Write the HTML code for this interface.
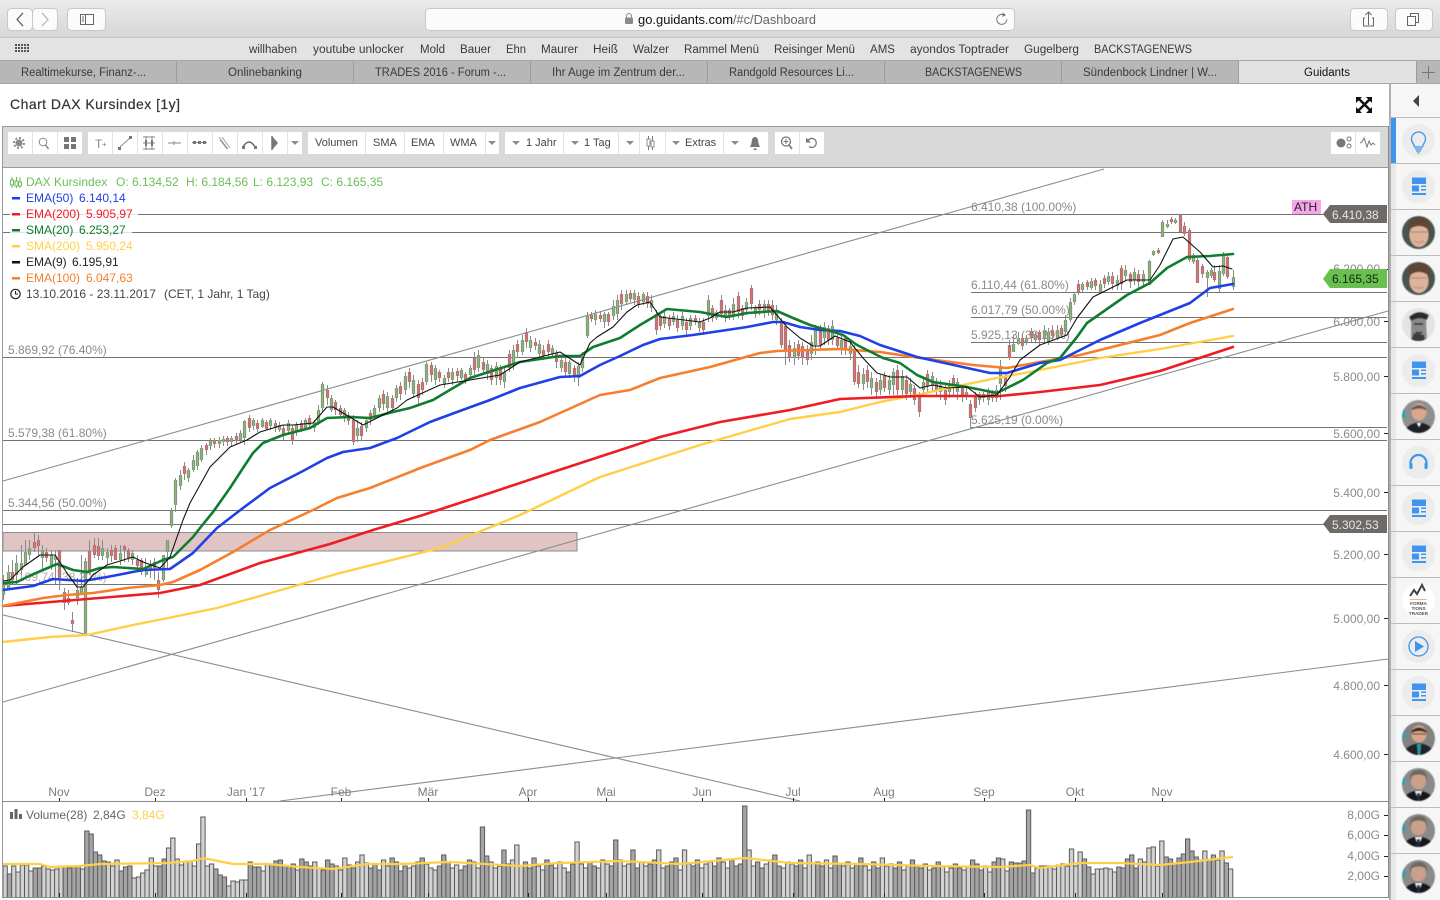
<!DOCTYPE html>
<html><head><meta charset="utf-8"><title>Guidants</title>
<style>
html,body{margin:0;padding:0;background:#fff;width:1440px;height:900px;overflow:hidden}
svg{display:block;font-family:"Liberation Sans",Arial,sans-serif}
.bm text,.tb text{fill:#3a3a3a;font-size:11.5px}
.lab{fill:#8a8a8a;font-size:12px}
.ax{fill:#8a8a8a;font-size:12px;text-anchor:end}
.xl{fill:#7d7d7d;font-size:12px;text-anchor:middle}
.btn{fill:#fff}
.t{fill:#444;font-size:11px}
.ar{fill:#8c8c8c}
.ic{fill:none;stroke:#8a8a8a;stroke-width:1}
</style></head><body>
<svg width="1440" height="900" viewBox="0 0 1440 900" xmlns="http://www.w3.org/2000/svg">
<defs>
<linearGradient id="tg" x1="0" y1="0" x2="0" y2="1"><stop offset="0" stop-color="#ebebeb"/><stop offset="1" stop-color="#d6d6d6"/></linearGradient>
<filter id="bl" x="-5%" y="-5%" width="110%" height="110%"><feGaussianBlur stdDeviation=".55"/></filter>
<symbol id="news" width="33" height="33" viewBox="0 0 33 33"><circle cx="16.5" cy="16.5" r="16.5" fill="#ececec"/><path fill="#3f94ee" d="M10 7.500h14v6.500H10zM10 15.500h7v6h-7zM19 15.500h5v1.500h-5zM19 19h5v1.500h-5zM10 23h14v2H10z"/></symbol>
<clipPath id="cc"><circle cx="16.500" cy="16.500" r="16.500"/></clipPath>
<symbol id="av1" width="33" height="33" viewBox="0 0 33 33"><g clip-path="url(#cc)"><rect width="33" height="33" fill="#46564e"/><ellipse cx="17" cy="11" rx="11" ry="10" fill="#5f4434"/><ellipse cx="17" cy="19" rx="9.500" ry="12" fill="#deb39c"/><path d="M8 13q9-6 18 0l-1-6H9z" fill="#5f4434"/><path d="M9 16h16" stroke="#9a8478"/><path d="M12 25q5 2.500 10 0" stroke="#c08a7c" fill="none"/></g></symbol>
<symbol id="av2" width="33" height="33" viewBox="0 0 33 33"><g clip-path="url(#cc)"><rect width="33" height="33" fill="#e4e4e4"/><path d="M9 33V12q8-7 15-2l1 23z" fill="#8b8b8b"/><path d="M7 9q9-9 20-2l-2 5q-8-4-16 1z" fill="#2c2c2c"/><path d="M12 16h9M14 24q4 2 6 0" stroke="#333" stroke-width="1.800" fill="none"/><path d="M9 33l3-8 10 2 1 6z" fill="#3a3a3a"/></g></symbol>
<symbol id="av3" width="33" height="33" viewBox="0 0 33 33"><g clip-path="url(#cc)"><rect width="33" height="33" fill="#8f8f8f"/><path d="M0 7l3 3v9l-3-2z" fill="#19a3b2"/><ellipse cx="17" cy="12" rx="7.500" ry="8.500" fill="#d9a68e"/><path d="M9.500 9q7-8 15 0l-1 1q-6-3-13 0z" fill="#6b5a48"/><path d="M2 33q2-9 15-11 13 2 15 11z" fill="#1f2125"/><path d="M15 23l2 4 2-4z" fill="#fff"/></g></symbol>
<symbol id="av4" width="33" height="33" viewBox="0 0 33 33"><g clip-path="url(#cc)"><rect width="33" height="33" fill="#828282"/><path d="M0 6l3 3v9l-3-2z" fill="#19a3b2"/><ellipse cx="17" cy="12" rx="7.500" ry="8.500" fill="#d6a58c"/><path d="M9.500 9q7-7 15 0v2q-7-4-15 0z" fill="#3a2c22"/><path d="M10 12h14" stroke="#33261e"/><path d="M1 33q2-10 16-12 14 2 16 12z" fill="#202226"/><path d="M15 22h4l-1 11h-2z" fill="#1f9fb0"/></g></symbol>
<symbol id="av5" width="33" height="33" viewBox="0 0 33 33"><g clip-path="url(#cc)"><rect width="33" height="33" fill="#8a8a8a"/><path d="M0 5l3 4v9l-3-2z" fill="#19a3b2"/><ellipse cx="16.500" cy="13" rx="7.500" ry="8.500" fill="#c9a08c"/><path d="M8 13q-1-11 9-11 9 0 8 11l-2-5q-6-3-13 0z" fill="#6c6a60"/><path d="M1 33q2-9 15-11 14 2 16 11z" fill="#17191d"/><path d="M13 23h7l-2 5h-3z" fill="#eee"/><path d="M15 25h3v8h-3z" fill="#222a44"/></g></symbol>
<path id="gc" d="M3 585V595M8 572V590M16 563V575M21 563V570M25 552V565M29 548V555M42 550V558M51 555V565M55 556V560M77 590V598M81 587V593M85 561V635M102 548V556M107 552V558M120 553V560M132 553V560M146 568V575M150 565V570M163 555V580M167 540V552M171 511V526M175 480V505M180 475V486M188 470V478M193 460V470M197 452V466M201 448V460M210 441V446M219 440V444M223 439V442M231 438V442M240 433V440M244 421V438M253 420V426M262 420V427M270 420V426M279 425V430M288 423V431M296 425V432M305 420V428M314 422V428M318 410V423M322 384V408M331 398V410M344 410V418M357 428V436M366 420V428M374 408V416M379 398V408M387 396V408M396 388V398M405 376V390M413 380V394M426 364V382M435 368V380M444 378V384M452 372V380M461 370V378M470 368V375M478 355V368M487 364V374M496 366V378M504 372V382M513 350V364M522 340V352M530 340V348M539 344V354M552 348V354M561 360V368M569 362V374M578 366V378M582 358V368M587 316V336M595 314V320M604 314V322M613 306V316M617 300V314M626 294V302M634 293V300M643 294V302M651 300V308M664 316V324M673 316V322M682 316V326M690 318V326M699 322V328M708 300V316M716 312V318M725 310V318M733 304V316M746 302V310M755 308V314M764 304V312M776 310V320M794 348V358M811 342V354M815 330V345M824 327V338M832 326V340M841 340V350M850 346V354M863 374V384M871 378V388M880 380V390M889 380V390M893 372V385M902 376V390M910 384V392M923 382V390M932 376V386M940 385V392M949 384V392M957 382V392M966 392V397M979 394V400M988 392V400M996 390V398M1000 366V384M1013 344V352M1018 338V344M1026 338V342M1035 335V340M1044 330V338M1048 332V342M1057 330V338M1065 320V332M1070 302V320M1074 294V302M1082 284V290M1091 281V288M1100 284V292M1108 276V282M1117 280V286M1125 270V276M1134 272V280M1143 274V282M1149 261V285M1153 251V255M1162 222V237M1167 224V227M1175 220V223M1193 255V262M1207 272V278M1211 270V276M1219 271V289M1223 254V274M1233 277V287"/>
<path id="rc" d="M12 572V580M34 542V548M38 540V546M46 552V558M59 550V578M64 592V603M68 598V603M72 620V624M89 551V573M94 545V555M98 546V556M111 550V556M115 548V560M124 546V550M128 550V558M137 560V566M141 560V572M154 562V568M158 580V590M184 466V474M206 445V450M214 440V444M227 438V442M236 436V441M249 418V428M257 423V429M266 422V429M275 423V428M283 428V435M292 428V440M301 423V430M309 418V425M327 390V398M335 402V410M340 408V415M348 415V421M353 420V442M361 426V436M370 413V420M383 394V404M392 398V408M400 386V394M409 372V382M418 384V398M422 382V390M431 365V375M439 372V378M448 372V378M457 371V376M465 374V380M474 358V370M483 362V370M491 368V380M500 368V380M509 354V368M517 344V352M526 332V342M535 342V346M543 350V356M548 344V352M556 353V362M565 362V372M574 368V376M591 315V319M600 315V319M608 314V322M621 294V304M630 293V299M638 296V304M647 296V304M656 314V330M660 316V326M669 318V326M677 320V328M686 322V330M695 318V322M703 322V330M712 308V318M721 300V314M729 310V316M738 296V312M742 308V316M751 288V304M759 304V310M768 304V312M772 305V315M781 322V345M785 326V350M789 345V358M798 344V356M802 346V358M807 350V360M820 330V345M828 328V340M837 338V346M845 338V350M854 350V382M858 372V384M867 370V382M876 382V392M884 376V388M897 370V390M906 380V394M914 388V400M919 396V412M927 374V386M936 382V390M945 390V400M953 378V388M962 388V396M970 404V418M975 396V408M983 394V398M992 393V398M1005 376V386M1009 345V358M1022 338V346M1031 331V338M1039 332V340M1052 330V336M1061 328V334M1078 284V292M1087 282V287M1095 280V286M1104 278V284M1112 276V284M1121 268V284M1130 274V282M1138 274V282M1158 250V253M1171 219V222M1180 215V232M1184 226V234M1189 230V260M1197 260V283M1202 266V274M1214 272V280M1227 257V277"/>
</defs>

<!-- Browser chrome -->
<rect width="1440" height="900" fill="#fff"/>
<rect width="1440" height="38" fill="url(#tg)"/>
<rect y="37" width="1440" height="1" fill="#c6c6c6"/>
<g fill="#fbfbfb" stroke="#c8c8c8">
<rect x="7.500" y="8.500" width="25" height="22" rx="4"/>
<rect x="32.500" y="8.500" width="25" height="22" rx="4"/>
<rect x="67.500" y="8.500" width="38" height="22" rx="4"/>
<rect x="425.500" y="8.500" width="589" height="22" rx="4"/>
<rect x="1350.500" y="8.500" width="37" height="22" rx="4"/>
<rect x="1395.500" y="8.500" width="37" height="22" rx="4"/>
</g>
<path d="M23 13l-6 6.500 6 6.500" fill="none" stroke="#666" stroke-width="1.300"/>
<path d="M42 13l6 6.500-6 6.500" fill="none" stroke="#bcbcbc" stroke-width="1.300"/>
<rect x="80.500" y="14.500" width="13" height="10" fill="none" stroke="#666"/><path d="M85.500 14.500v10M82 17h2M82 19h2M82 21h2" stroke="#666" fill="none"/>
<rect x="625" y="17.500" width="8" height="6.500" rx="1" fill="#8a8a8a"/><path d="M626.500 18v-2a2.500 2.500 0 0 1 5 0v2" fill="none" stroke="#8a8a8a"/>
<text x="638" y="24" font-size="12.500" fill="#111" textLength="95" lengthAdjust="spacingAndGlyphs">go.guidants.com</text>
<text x="733" y="24" font-size="12.500" fill="#666" textLength="83" lengthAdjust="spacingAndGlyphs">/#c/Dashboard</text>
<path d="M1005 15.500a5 5 0 1 0 1.800 3.800" fill="none" stroke="#777"/><path d="M1002.500 12.500l3.500 2.500-3.500 2z" fill="#777"/>
<path d="M1368.500 12v13M1365.500 15l3-3 3 3M1365 18h-1.500v8h10v-8H1372" fill="none" stroke="#666"/>
<path d="M1410.500 16.500v-3h8v9h-3M1407.500 16.500h8v9h-8z" fill="none" stroke="#666"/>

<rect y="38" width="1440" height="22" fill="#e3e3e3"/>
<rect y="60" width="1440" height="1" fill="#a8a8a8"/>
<g fill="#555"><path d="M15 44h2v2h-2zM18 44h2v2h-2zM21 44h2v2h-2zM24 44h2v2h-2zM27 44h2v2h-2zM15 47h2v2h-2zM18 47h2v2h-2zM21 47h2v2h-2zM24 47h2v2h-2zM27 47h2v2h-2zM15 50h2v2h-2zM18 50h2v2h-2zM21 50h2v2h-2zM24 50h2v2h-2zM27 50h2v2h-2z"/></g>
<g class="bm">
<text x="249" y="53" textLength="48" lengthAdjust="spacingAndGlyphs">willhaben</text>
<text x="313" y="53" textLength="91" lengthAdjust="spacingAndGlyphs">youtube unlocker</text>
<text x="420" y="53" textLength="25" lengthAdjust="spacingAndGlyphs">Mold</text>
<text x="460" y="53" textLength="31" lengthAdjust="spacingAndGlyphs">Bauer</text>
<text x="506" y="53" textLength="20" lengthAdjust="spacingAndGlyphs">Ehn</text>
<text x="541" y="53" textLength="37" lengthAdjust="spacingAndGlyphs">Maurer</text>
<text x="593" y="53" textLength="25" lengthAdjust="spacingAndGlyphs">Heiß</text>
<text x="633" y="53" textLength="36" lengthAdjust="spacingAndGlyphs">Walzer</text>
<text x="684" y="53" textLength="75" lengthAdjust="spacingAndGlyphs">Rammel Menü</text>
<text x="774" y="53" textLength="81" lengthAdjust="spacingAndGlyphs">Reisinger Menü</text>
<text x="870" y="53" textLength="25" lengthAdjust="spacingAndGlyphs">AMS</text>
<text x="910" y="53" textLength="99" lengthAdjust="spacingAndGlyphs">ayondos Toptrader</text>
<text x="1024" y="53" textLength="55" lengthAdjust="spacingAndGlyphs">Gugelberg</text>
<text x="1094" y="53" textLength="98" lengthAdjust="spacingAndGlyphs">BACKSTAGENEWS</text>
</g>
<rect y="61" width="1440" height="22" fill="#b7b7b7"/>
<rect x="1239" y="61" width="177" height="22" fill="#e2e2e2"/>
<rect y="83" width="1440" height="1" fill="#a6a6a6"/>
<path d="M176.500 61v22M353.500 61v22M530.500 61v22M707.500 61v22M884.500 61v22M1061.500 61v22M1238.500 61v22M1416.500 61v22" stroke="#9c9c9c"/>
<path d="M1422 72.500h13M1428.500 66v13" stroke="#777"/>
<g class="tb">
<text x="21" y="76" textLength="125" lengthAdjust="spacingAndGlyphs">Realtimekurse, Finanz-...</text>
<text x="228" y="76" textLength="74" lengthAdjust="spacingAndGlyphs">Onlinebanking</text>
<text x="375" y="76" textLength="131" lengthAdjust="spacingAndGlyphs">TRADES 2016 - Forum -...</text>
<text x="552" y="76" textLength="133" lengthAdjust="spacingAndGlyphs">Ihr Auge im Zentrum der...</text>
<text x="729" y="76" textLength="125" lengthAdjust="spacingAndGlyphs">Randgold Resources Li...</text>
<text x="925" y="76" textLength="97" lengthAdjust="spacingAndGlyphs">BACKSTAGENEWS</text>
<text x="1083" y="76" textLength="134" lengthAdjust="spacingAndGlyphs">Sündenbock Lindner | W...</text>
<text x="1304" y="76" textLength="46" lengthAdjust="spacingAndGlyphs" style="fill:#111">Guidants</text>
</g>

<!-- Title -->
<text x="10" y="109" font-size="14" fill="#333" textLength="170" lengthAdjust="spacing" stroke="#333" stroke-width=".2">Chart DAX Kursindex [1y]</text>
<path d="M1358 98l13 13M1371 98l-13 13" stroke="#111" stroke-width="2.500"/>
<path d="M1356 97h6l-6 6zM1372 97h-6l6 6zM1356 113h6l-6-6zM1372 113h-6l6-6z" fill="#111"/>

<!-- Chart frame and toolbar -->
<rect x="2.500" y="126.500" width="1386" height="771" fill="#fff" stroke="#9a9a9a"/>
<rect x="3" y="127" width="1385" height="40" fill="#d9d9d9"/>
<rect x="3" y="167" width="1385" height="1" fill="#9a9a9a"/>
<g class="btn">
<rect x="8" y="132" width="74" height="22"/><rect x="88" y="132" width="214" height="22"/><rect x="308" y="132" width="191" height="22"/><rect x="505" y="132" width="263" height="22"/><rect x="775" y="132" width="49" height="22"/><rect x="1331" y="132" width="49" height="22"/>
</g>
<path d="M32.500 132v22M57.500 132v22M112.500 132v22M137.500 132v22M162.500 132v22M187.500 132v22M212.500 132v22M237.500 132v22M262.500 132v22M287.500 132v22M365.500 132v22M404.500 132v22M443.500 132v22M485.500 132v22M563.500 132v22M618.500 132v22M639.500 132v22M665.500 132v22M723.500 132v22M799.500 132v22M1355.500 132v22" stroke="#e2e2e2"/>
<!-- toolbar icons -->
<circle cx="19" cy="143" r="3.500" fill="#8a8a8a"/><circle cx="19" cy="143" r="5" fill="none" stroke="#8a8a8a" stroke-width="2" stroke-dasharray="2 1.900"/>
<circle cx="43" cy="142" r="3.800" class="ic" stroke-width="1.300"/><path d="M45.500 145l3 4" stroke="#8a8a8a" stroke-width="1.500"/>
<path d="M64 137h5v5h-5zM71 137h5v5h-5zM64 144h5v5h-5zM71 144h5v5h-5z" fill="#777"/>
<text x="95" y="148" font-size="12" fill="#888">T</text><text x="102" y="147" font-size="8" fill="#888">+</text>
<path d="M119 148l12-11" class="ic"/><path d="M118 147h3v3h-3zM129 136h3v3h-3z" fill="#777"/>
<path d="M143 137h12M143 143h12M143 149h12M146 136v14M152 136v14" class="ic"/><path d="M145 140h2v6h-2zM151 140h2v6h-2z" fill="#777"/>
<path d="M168 143h13M174 141v4" class="ic"/>
<path d="M192 142.500h15" class="ic"/><path d="M193 141h3v3h-3zM198 141h3v3h-3zM203 141h3v3h-3z" fill="#777"/>
<path d="M219 137l9 12M222 137l8 11M220 140l7 9" fill="none" stroke="#999" stroke-width=".9"/>
<path d="M243 147q6-10 12 0" fill="none" stroke="#666" stroke-width="1.500"/><path d="M242 146h3v3h-3zM254 146h3v3h-3z" fill="#777"/>
<path d="M272 136l6 7-6 7z" fill="#777"/><path d="M272 136v14" stroke="#777" stroke-width="1.500"/>
<g class="ar"><path d="M291 141h8l-4 4z"/><path d="M488 141h8l-4 4z"/><path d="M512 141h8l-4 4z"/><path d="M571 141h8l-4 4z"/><path d="M626 141h8l-4 4z"/><path d="M672 141h8l-4 4z"/><path d="M731 141h8l-4 4z"/></g>
<text x="315" y="146" class="t">Volumen</text><text x="373" y="146" class="t">SMA</text><text x="411" y="146" class="t">EMA</text><text x="450" y="146" class="t">WMA</text>
<text x="526" y="146" class="t">1 Jahr</text><text x="584" y="146" class="t">1 Tag</text><text x="685" y="146" class="t">Extras</text>
<path d="M648.500 136v14M652.500 136v14" stroke="#777"/><path d="M647 139h3v7h-3zM651 141h3v6h-3z" fill="#fff" stroke="#777" stroke-width=".8"/>
<path d="M755 137c-3 0-3 3-3.500 6s-1.500 3-1.500 4h10c0-1-1-1-1.500-4s-.5-6-3.500-6zM753.500 148.500h3v1.500h-3z" fill="#777"/>
<circle cx="786" cy="141.500" r="4.500" fill="none" stroke="#777" stroke-width="1.300"/><path d="M789 145l3 4" stroke="#777" stroke-width="1.700"/><path d="M786 139v5M783.500 141.500h5" stroke="#777"/>
<path d="M808 140.500a4.500 4.500 0 1 1 1 6" fill="none" stroke="#777" stroke-width="1.300"/><path d="M806 137.500v5h5z" fill="#777"/>
<circle cx="1341" cy="143" r="4.500" fill="#777"/><circle cx="1349" cy="139" r="2" fill="none" stroke="#777"/><circle cx="1349" cy="146" r="2" fill="none" stroke="#777"/>
<path d="M1360 143l2-1 2-4 3 9 2-6 2 4 2-2 2 2" fill="none" stroke="#777"/>

<!-- Zone rectangle -->
<rect x="3" y="532.500" width="574" height="18.500" fill="#e1c5c5" stroke="#8d8d8d"/>
<!-- Horizontal lines -->
<g stroke="#747474" fill="none">
<path d="M3 214.500h1384M3 232.500h1384M971 292.500h416M971 317.500h416M971 342.500h416M3 357.500h1384M971 427.500h416M3 440.500h1384M3 510.500h1384M3 524.500h1384M3 584.500h1384"/>
</g>
<!-- Trend lines -->
<g stroke="#8c8c8c" stroke-width="1.100" fill="none">
<path d="M3 481L1104 169"/>
<path d="M3 702L1388 311"/>
<path d="M3 615L800 801"/>
<path d="M280 801L1388 659"/>
</g>
<!-- Fibonacci labels -->
<g class="lab">
<text x="971" y="211">6.410,38 (100.00%)</text>
<text x="971" y="289">6.110,44 (61.80%)</text>
<text x="971" y="314">6.017,79 (50.00%)</text>
<text x="971" y="339">5.925,13 (38.20%)</text>
<text x="971" y="424">5.625,19 (0.00%)</text>
<text x="8" y="354">5.869,92 (76.40%)</text>
<text x="8" y="437">5.579,38 (61.80%)</text>
<text x="8" y="507">5.344,56 (50.00%)</text>
<text x="8" y="581" opacity=".7">5.109,74 (38.20%)</text>
</g>

<!-- Candles -->
<g transform="translate(.5 0)" fill="none">
<path stroke="#8a8a8a" d="M3 575V600M8 565V590M12 560V585M16 555V585M21 545V575M25 540V560M29 540V560M34 532V552M38 535V555M42 545V570M46 548V562M51 550V570M55 550V585M59 550V590M64 588V610M68 590V605M72 612V632M77 578V605M81 555V590M85 558V635M89 540V575M94 538V558M98 538V560M102 540V560M107 548V565M111 545V562M115 545V560M120 545V565M124 545V562M128 548V562M132 550V565M137 555V570M141 558V575M145 558V577M150 560V578M154 558V580M158 572V598M163 560V582M167 550V568M171 508V528M175 478V512M180 470V490M184 462V480M188 468V482M193 455V472M197 450V470M201 445V462M206 443V455M210 438V450M214 438V448M219 437V448M223 436V446M227 436V446M231 436V446M236 433V444M240 430V442M244 420V445M249 415V432M253 418V430M257 420V432M262 418V428M266 420V430M270 418V430M275 420V432M279 422V432M283 425V440M288 420V435M292 425V445M296 422V436M301 420V432M305 418V430M309 415V428M314 420V432M318 405V425M322 382V412M327 385V405M331 395V412M335 400V415M340 405V418M344 408V422M348 412V425M353 415V445M357 420V442M361 422V440M366 418V432M370 410V425M374 405V420M379 395V412M383 390V410M387 392V412M392 395V412M396 385V402M400 382V400M405 372V395M409 368V388M413 375V398M418 380V405M422 378V395M426 362V385M431 362V382M435 365V385M439 370V382M444 375V388M448 368V382M452 368V385M457 368V382M461 368V380M465 372V384M470 365V378M474 352V375M478 350V372M483 358V375M487 360V380M491 365V385M496 362V385M500 365V385M504 368V388M509 350V372M513 345V370M517 340V358M522 335V355M526 328V348M530 336V352M535 338V350M539 340V360M543 345V360M548 340V358M552 345V358M556 350V368M561 355V372M565 358V378M569 360V378M574 365V382M578 362V386M582 352V372M587 312V338M591 312V322M595 310V325M600 312V322M604 312V328M608 312V326M613 300V320M617 295V320M621 290V310M626 290V305M630 290V302M634 290V305M638 292V308M643 292V305M647 292V308M651 295V312M656 310V335M660 312V330M664 312V328M669 315V330M673 312V325M677 315V332M682 312V330M686 318V335M690 315V330M695 315V325M699 318V332M703 318V335M708 295V322M712 305V322M716 310V320M721 295V318M725 305V322M729 308V320M733 298V320M738 292V318M742 305V320M746 298V315M751 285V310M755 305V318M759 300V315M764 300V318M768 300V316M772 300V320M776 305V325M781 318V348M785 322V365M789 340V362M794 342V365M798 340V360M802 342V365M807 345V365M811 335V360M815 325V355M820 325V350M824 322V345M828 325V345M832 320V345M837 335V350M841 335V355M845 335V355M850 340V360M854 345V385M858 365V388M863 368V390M867 365V388M871 372V395M876 378V398M880 375V395M884 372V392M889 375V395M893 368V395M897 365V395M902 370V395M906 375V400M910 378V398M914 385V405M919 392V417M923 378V395M927 370V392M932 372V392M936 378V395M940 380V400M945 385V405M949 380V398M953 375V395M957 378V400M962 385V402M966 388V400M970 400V428M975 392V412M979 392V405M983 392V402M988 388V405M992 390V402M996 385V402M1000 360V400M1005 372V392M1009 340V360M1013 335V352M1018 332V345M1022 335V350M1026 335V345M1031 328V342M1035 332V342M1039 330V345M1044 325V342M1048 328V345M1052 325V340M1057 325V340M1061 325V338M1065 315V335M1070 298V322M1074 292V305M1078 280V295M1082 282V292M1087 280V290M1091 278V290M1095 278V290M1100 280V294M1104 275V288M1108 272V285M1112 272V290M1117 275V290M1121 265V290M1125 265V280M1130 272V288M1134 268V285M1138 270V288M1143 270V285M1149 260V285M1153 250V256M1158 248V254M1162 220V237M1167 220V228M1171 217V224M1175 218V224M1180 214V232M1184 222V236M1189 228V262M1193 253V264M1197 258V283M1202 264V278M1207 270V297M1211 268V278M1214 265V282M1219 265V292M1223 252V276M1227 255V279M1233 270V290"/>
<use href="#gc" stroke="#808080" stroke-width="3.200"/>
<use href="#rc" stroke="#808080" stroke-width="3.200"/>
<use href="#gc" stroke="#86bb72" stroke-width="1.800"/>
<use href="#rc" stroke="#ea6a6a" stroke-width="1.800"/>
</g>

<!-- Moving averages -->
<g fill="none" stroke-linejoin="round" stroke-linecap="round">
<path stroke="#ffcf47" stroke-width="2.400" d="M3 642L50 637L87 635L133 625L173 617L217 608L260 596L340 573L440 548L520 515L600 477L700 445L790 419L840 412L880 402L917 395L953 387L997 378L1040 370L1100 358L1160 349L1233 336"/>
<path stroke="#ee1c25" stroke-width="2.600" d="M3 606L87 599L160 593L200 585L260 563L330 544L373 530L423 515L490 493L550 473L660 437L720 422L790 410L840 399L917 396L1000 396L1040 392L1100 385L1160 371L1233 347"/>
<path stroke="#f77e2d" stroke-width="2.600" d="M3 606L43 598L67 595L93 593L127 588L160 585L173 582L200 570L233 552L270 530L313 510L337 498L370 488L423 467L470 450L490 440L540 422L600 395L630 390L660 378L710 367L760 353L777 351L840 349L880 352L913 357L973 365L1007 368L1040 362L1080 355L1100 350L1160 335L1190 323L1233 309"/>
<path stroke="#2040e6" stroke-width="2.600" d="M3 590L33 586L53 579L83 581L107 577L143 570L170 569L193 553L217 528L243 508L270 488L303 471L327 458L343 452L370 448L397 438L430 422L457 412L490 400L520 388L560 377L580 376L600 365L620 356L643 345L660 339L693 335L727 330L747 327L773 322L783 322L800 327L820 330L840 331L860 336L880 345L917 357L940 362L990 373L1007 373L1040 363L1060 360L1100 340L1140 323L1160 315L1190 303L1210 288L1233 284"/>
<path stroke="#0f7d30" stroke-width="2.600" d="M3 583L17 582L27 577L43 570L57 564L73 570L87 572L100 568L113 567L143 569L163 560L173 557L193 537L200 528L213 512L230 488L243 468L253 453L263 443L283 435L310 428L327 418L350 417L370 418L393 412L410 408L433 400L470 378L520 362L560 356L580 356L593 347L620 338L640 325L667 309L700 312L727 317L747 313L777 311L793 318L810 325L827 330L843 335L857 345L883 358L900 363L917 375L933 382L967 387L997 393L1023 380L1047 363L1060 358L1077 337L1087 323L1127 295L1150 283L1167 268L1187 257L1210 256L1233 254"/>
<path stroke="#111" stroke-width="1.100" d="M3 581L10 580L23 567L40 555L55 555L67 573L77 587L83 587L93 575L107 565L133 557L143 562L160 568L170 557L183 520L190 503L210 467L230 447L247 440L260 432L283 425L293 425L313 423L327 407L333 407L343 413L363 425L377 418L397 408L407 400L440 385L500 375L520 362L560 352L580 365L590 343L597 337L613 327L627 312L637 305L650 302L660 317L700 322L710 318L720 312L733 312L747 308L770 307L787 327L800 338L813 346L820 346L835 336L850 342L863 358L877 373L890 377L907 377L920 388L933 385L947 388L967 387L980 397L997 395L1010 377L1020 360L1040 345L1067 335L1077 318L1093 297L1127 280L1150 280L1160 265L1173 239L1183 237L1200 252L1213 267L1223 266L1232 269"/>
</g>

<!-- Legend -->
<rect x="10" y="206" width="128" height="16" fill="#fff" opacity=".8"/><rect x="10" y="222" width="122" height="16" fill="#fff" opacity=".8"/>
<g font-size="12">
<path d="M12 177v11M16.500 177v11M20 177v11" stroke="#67bd55" fill="none"/><path d="M10.500 180h3v5h-3zM15 181h3v5h-3zM18.500 182h3v4h-3z" fill="#fff" stroke="#67bd55"/>
<g fill="#69bf55"><text x="26" y="186">DAX Kursindex</text><text x="116" y="186">O: 6.134,52</text><text x="186" y="186">H: 6.184,56</text><text x="253" y="186">L: 6.123,93</text><text x="321" y="186">C: 6.165,35</text></g>
<rect x="12" y="197" width="8" height="2.500" fill="#2040e6"/><text x="26" y="202" fill="#2040e6">EMA(50)</text><text x="79" y="202" fill="#2040e6">6.140,14</text>
<rect x="12" y="213" width="8" height="2.500" fill="#ee1c25"/><text x="26" y="218" fill="#ee1c25">EMA(200)</text><text x="86" y="218" fill="#ee1c25">5.905,97</text>
<rect x="12" y="229" width="8" height="2.500" fill="#0f7d30"/><text x="26" y="234" fill="#0f7d30">SMA(20)</text><text x="79" y="234" fill="#0f7d30">6.253,27</text>
<rect x="12" y="245" width="8" height="2.500" fill="#ffcf47"/><text x="26" y="250" fill="#ffcf47">SMA(200)</text><text x="86" y="250" fill="#ffcf47">5.950,24</text>
<rect x="12" y="261" width="8" height="2.500" fill="#111"/><text x="26" y="266" fill="#222">EMA(9)</text><text x="72" y="266" fill="#222">6.195,91</text>
<rect x="12" y="277" width="8" height="2.500" fill="#f77e2d"/><text x="26" y="282" fill="#f77e2d">EMA(100)</text><text x="86" y="282" fill="#f77e2d">6.047,63</text>
<circle cx="15.500" cy="294" r="4.700" fill="none" stroke="#222" stroke-width="1.200"/><path d="M15.500 291v3h2.500" fill="none" stroke="#222"/>
<text x="26" y="298" fill="#444">13.10.2016 - 23.11.2017</text><text x="164" y="298" fill="#444">(CET, 1 Jahr, 1 Tag)</text>
</g>

<!-- Y axis -->
<g class="ax">
<text x="1380" y="273">6.200,00</text><text x="1380" y="326">6.000,00</text><text x="1380" y="381">5.800,00</text><text x="1380" y="438">5.600,00</text><text x="1380" y="497">5.400,00</text><text x="1380" y="559">5.200,00</text><text x="1380" y="623">5.000,00</text><text x="1380" y="690">4.800,00</text><text x="1380" y="759">4.600,00</text>
<text x="1380" y="819">8,00G</text><text x="1380" y="839">6,00G</text><text x="1380" y="860">4,00G</text><text x="1380" y="880">2,00G</text>
</g>
<path d="M1384 269.500h4M1384 321.500h4M1384 376.500h4M1384 433.500h4M1384 492.500h4M1384 554.500h4M1384 618.500h4M1384 685.500h4M1384 754.500h4M1384 815.500h4M1384 835.500h4M1384 856.500h4M1384 876.500h4" stroke="#222"/>

<!-- Badges -->
<rect x="1292" y="200" width="29" height="14" fill="#f7a6ea"/><text x="1294" y="211" font-size="12" fill="#222">ATH</text>
<path d="M1323 214l7-9h57v18h-57z" fill="#6e6a66"/><text x="1332" y="219" font-size="12" fill="#e6e6e6">6.410,38</text>
<path d="M1323 279l7-10h57v19h-57z" fill="#69bf4f"/><text x="1332" y="283" font-size="12" fill="#14260f">6.165,35</text>
<path d="M1323 524l7-9h57v18h-57z" fill="#6e6a66"/><text x="1332" y="529" font-size="12" fill="#e6e6e6">5.302,53</text>

<!-- X axis -->
<g class="xl">
<text x="59" y="796">Nov</text><text x="155" y="796">Dez</text><text x="246" y="796">Jan '17</text><text x="341" y="796">Feb</text><text x="428" y="796">Mär</text><text x="528" y="796">Apr</text><text x="606" y="796">Mai</text><text x="702" y="796">Jun</text><text x="793" y="796">Jul</text><text x="884" y="796">Aug</text><text x="984" y="796">Sep</text><text x="1075" y="796">Okt</text><text x="1162" y="796">Nov</text>
</g>
<rect x="3" y="801" width="1385" height="1" fill="#8a8a8a"/>
<path d="M59.500 798v3M155.500 798v3M246.500 798v3M341.500 798v3M428.500 798v3M528.500 798v3M606.500 798v3M702.500 798v3M793.500 798v3M884.500 798v3M984.500 798v3M1075.500 798v3M1162.500 798v3" stroke="#222"/>

<!-- Volume -->
<path d="M10 812h3v7h-3zM14.500 809h3v10h-3zM19 814h3v5h-3z" fill="#666"/>
<text x="26" y="819" font-size="12" fill="#666">Volume(28)</text><text x="93" y="819" font-size="12" fill="#666">2,84G</text><text x="132" y="819" font-size="12" fill="#ffcf47">3,84G</text>
<g stroke="#5a5a5a" stroke-width="1">
<path fill="#d2d2d2" d="M3 897V866h4.300V897M11.600 897V866h4.300V897V872h4.300V897V865h4.300V897V865h4.300V897V871h4.300V897M41.700 897V866h4.300V897V869h4.300V897V870h4.300V897V869h4.300V897V866h4.300V897M80.400 897V869h4.300V897M106.200 897V862h4.300V897V866h4.300V897V860h4.300V897M132 897V878h4.300V897V877h4.300V897V873h4.300V897V870h4.300V897V858h4.300V897V866h4.300V897M166.400 897V848h4.300V897V838h4.300V897V859h4.300V897V865h4.300V897V862h4.300V897V861h4.300V897V866h4.300V897V844h4.300V897V817h4.300V897V866h4.300V897V864h4.300V897M226.600 897V886h4.300V897V881h4.300V897V882h4.300V897V880h4.300V897V880h4.300V897M261 897V871h4.300V897V864h4.300V897M295.400 897V870h4.300V897M312.600 897V862h4.300V897V868h4.300V897M334.100 897V866h4.300V897V870h4.300V897V858h4.300V897M355.600 897V862h4.300V897V855h4.300V897V863h4.300V897M381.400 897V860h4.300V897V866h4.300V897M407.200 897V868h4.300V897V866h4.300V897M424.400 897V864h4.300V897V868h4.300V897V870h4.300V897M450.200 897V868h4.300V897V865h4.300V897M471.700 897V862h4.300V897V868h4.300V897M488.900 897V862h4.300V897V868h4.300V897V866h4.300V897M510.400 897V860h4.300V897V845h4.300V897V866h4.300V897M536.200 897V866h4.300V897V870h4.300V897M553.400 897V868h4.300V897V862h4.300V897V868h4.300V897M574.900 897V842h4.300V897V864h4.300V897V868h4.300V897M596.400 897V868h4.300V897V860h4.300V897V864h4.300V897M617.900 897V860h4.300V897V866h4.300V897V864h4.300V897M639.400 897V862h4.300V897V866h4.300V897M656.600 897V850h4.300V897V868h4.300V897M678.100 897V870h4.300V897V850h4.300V897V864h4.300V897M699.600 897V868h4.300V897V864h4.300V897V862h4.300V897M721.100 897V862h4.300V897V868h4.300V897M746.900 897V850h4.300V897V866h4.300V897M764.100 897V864h4.300V897V860h4.300V897M781.300 897V868h4.300V897V862h4.300V897V864h4.300V897M802.800 897V868h4.300V897V855h4.300V897V864h4.300V897M824.300 897V860h4.300V897V868h4.300V897M841.500 897V866h4.300V897V862h4.300V897V868h4.300V897M863 897V866h4.300V897V870h4.300V897M880.200 897V858h4.300V897V866h4.300V897V864h4.300V897M901.700 897V870h4.300V897V866h4.300V897M923.200 897V864h4.300V897V870h4.300V897M940.400 897V866h4.300V897V872h4.300V897V868h4.300V897M961.900 897V870h4.300V897V866h4.300V897M983.400 897V866h4.300V897V872h4.300V897M1000.600 897V859h4.300V897V871h4.300V897M1035 897V868h4.300V897V866h4.300V897V866h4.300V897V866h4.300V897V869h4.300V897V865h4.300V897V864h4.300V897V866h4.300V897V849h4.300V897V866h4.300V897V852h4.300V897M1090.900 897V874h4.300V897V869h4.300V897V869h4.300V897V868h4.300V897V869h4.300V897V872h4.300V897M1138.200 897V859h4.300V897V862h4.300V897V848h4.300V897V847h4.300V897V866h4.300V897V841h4.300V897M1202.700 897V851h4.300V897M1215.600 897V860h4.300V897V851h4.300V897M1228.500 897V869h4.300V897"/>
<path fill="#a4a4a4" d="M7.300 897V874h4.300V897M33.100 897V868h4.300V897V868h4.300V897M63.200 897V866h4.300V897V868h4.300V897V866h4.300V897V866h4.300V897M84.700 897V831h4.300V897V834h4.300V897V852h4.300V897V855h4.300V897V861h4.300V897M119.100 897V871h4.300V897V867h4.300V897V866h4.300V897M157.800 897V866h4.300V897V859h4.300V897M213.700 897V869h4.300V897V875h4.300V897V877h4.300V897M248.100 897V862h4.300V897V867h4.300V897V867h4.300V897M269.600 897V865h4.300V897V861h4.300V897V860h4.300V897V866h4.300V897V866h4.300V897V864h4.300V897M299.700 897V859h4.300V897V862h4.300V897V866h4.300V897M321.200 897V870h4.300V897V860h4.300V897V864h4.300V897M347 897V865h4.300V897V868h4.300V897M368.500 897V868h4.300V897V864h4.300V897V870h4.300V897M390 897V858h4.300V897V862h4.300V897V871h4.300V897V866h4.300V897M415.800 897V862h4.300V897V858h4.300V897M437.300 897V866h4.300V897V855h4.300V897V862h4.300V897M458.800 897V870h4.300V897V866h4.300V897V860h4.300V897M480.300 897V827h4.300V897V856h4.300V897M501.800 897V850h4.300V897V864h4.300V897M523.300 897V862h4.300V897V868h4.300V897V858h4.300V897M544.800 897V860h4.300V897V865h4.300V897M566.300 897V872h4.300V897V864h4.300V897M587.800 897V862h4.300V897V866h4.300V897M609.300 897V866h4.300V897V840h4.300V897M630.800 897V850h4.300V897V868h4.300V897M648 897V864h4.300V897V860h4.300V897M665.200 897V866h4.300V897V862h4.300V897V858h4.300V897M691 897V866h4.300V897V860h4.300V897M712.500 897V866h4.300V897V858h4.300V897M729.700 897V860h4.300V897V866h4.300V897V864h4.300V897V806h4.300V897M755.500 897V862h4.300V897V868h4.300V897M772.700 897V855h4.300V897V866h4.300V897M794.200 897V866h4.300V897V860h4.300V897M815.700 897V862h4.300V897V866h4.300V897M832.900 897V856h4.300V897V864h4.300V897M854.400 897V864h4.300V897V858h4.300V897M871.600 897V862h4.300V897V868h4.300V897M893.100 897V868h4.300V897V862h4.300V897M910.300 897V860h4.300V897V866h4.300V897V868h4.300V897M931.800 897V868h4.300V897V862h4.300V897M953.300 897V864h4.300V897V868h4.300V897M970.500 897V860h4.300V897V864h4.300V897V870h4.300V897M992 897V862h4.300V897V858h4.300V897M1009.200 897V862h4.300V897V863h4.300V897V863h4.300V897V861h4.300V897V810h4.300V897V873h4.300V897M1082.300 897V859h4.300V897V867h4.300V897M1116.700 897V867h4.300V897V868h4.300V897V859h4.300V897V855h4.300V897V868h4.300V897M1164 897V857h4.300V897V859h4.300V897V863h4.300V897V858h4.300V897V854h4.300V897V839h4.300V897V851h4.300V897V857h4.300V897V860h4.300V897M1207 897V860h4.300V897V855h4.300V897M1224.200 897V863h4.300V897"/>
</g>
<path fill="none" stroke="#ffcf47" stroke-width="2.200" stroke-linejoin="round" d="M3 864L40 864L50 867L80 866L100 864L167 863L193 861L203 858L233 864L267 864L300 867L333 869L367 864L400 864L450 862L520 866L560 863L620 861L680 864L745 858L790 863L860 864L930 866L1000 867L1030 865L1040 868L1080 863L1120 863L1160 865L1190 862L1233 857"/>
<path d="M59.500 893v4M155.500 893v4M246.500 893v4M341.500 893v4M428.500 893v4M528.500 893v4M606.500 893v4M702.500 893v4M793.500 893v4M884.500 893v4M984.500 893v4M1075.500 893v4M1162.500 893v4" stroke="#222"/>
<rect x="2" y="897" width="1387" height="1" fill="#8a8a8a"/>
<rect x="2" y="126" width="1" height="772" fill="#9a9a9a"/>
<rect x="1388" y="126" width="1" height="772" fill="#8a8a8a"/>

<!-- Right sidebar -->
<rect x="1389" y="84" width="51" height="816" fill="#f6f6f6"/>
<rect x="1389" y="84" width="2" height="816" fill="#b0b0b0"/>
<rect x="1391" y="117" width="5" height="783" fill="#e8e8e8"/>
<rect x="1391" y="118" width="5" height="45" fill="#3f94ee"/>
<path d="M1391 117.500h49M1391 163.500h49M1391 209.500h49M1391 255.500h49M1391 301.500h49M1391 347.500h49M1391 393.500h49M1391 439.500h49M1391 485.500h49M1391 531.500h49M1391 577.500h49M1391 623.500h49M1391 669.500h49M1391 715.500h49M1391 761.500h49M1391 807.500h49M1391 853.500h49" stroke="#bdbdbd"/>
<path d="M1419 95l-6 6 6 6z" fill="#444"/>
<circle cx="1418.500" cy="140.500" r="16.500" fill="#ececec"/>
<path d="M1414.500 147c0-3-3-4-3-8a7 7 0 0 1 14 0c0 4-3 5-3 8zM1415 149h7M1416 151h5M1417.500 153h2" fill="none" stroke="#3f94ee" stroke-width="1.300"/>
<use href="#news" x="1402" y="170"/>
<use href="#av1" x="1402" y="216" filter="url(#bl)"/>
<use href="#av1" x="1402" y="262" filter="url(#bl)"/>
<use href="#av2" x="1402" y="308" filter="url(#bl)"/>
<use href="#news" x="1402" y="354"/>
<use href="#av3" x="1402" y="400" filter="url(#bl)"/>
<circle cx="1418.500" cy="462.500" r="16.500" fill="#ececec"/>
<path d="M1410.500 468v-5a8 8 0 0 1 16 0v5" fill="none" stroke="#3f94ee" stroke-width="2.200"/><rect x="1409.500" y="463" width="3" height="6" rx="1" fill="#3f94ee"/><rect x="1424.500" y="463" width="3" height="6" rx="1" fill="#3f94ee"/>
<use href="#news" x="1402" y="492"/>
<use href="#news" x="1402" y="538"/>
<circle cx="1418.500" cy="600.500" r="16.500" fill="#fff"/>
<path d="M1410 596l4-6 3 4 5-9 3 6" fill="none" stroke="#444" stroke-width="2"/>
<rect x="1410" y="599" width="17" height="1" fill="#f2b477"/>
<g font-size="4.600" fill="#555" text-anchor="middle" font-weight="700"><text x="1418.500" y="605">FORMA</text><text x="1418.500" y="610">TIONS</text><text x="1418.500" y="615">TRADER</text></g>
<circle cx="1418.500" cy="646.500" r="16.500" fill="#ececec"/>
<circle cx="1418.500" cy="646.500" r="9.500" fill="none" stroke="#3f94ee" stroke-width="1.300"/><path d="M1415 641l9 5.500-9 5.500z" fill="#3f94ee"/>
<use href="#news" x="1402" y="676"/>
<use href="#av4" x="1402" y="722" filter="url(#bl)"/>
<use href="#av5" x="1402" y="768" filter="url(#bl)"/>
<use href="#av5" x="1402" y="814" filter="url(#bl)"/>
<use href="#av5" x="1402" y="860" filter="url(#bl)"/>
</svg>
</body></html>
